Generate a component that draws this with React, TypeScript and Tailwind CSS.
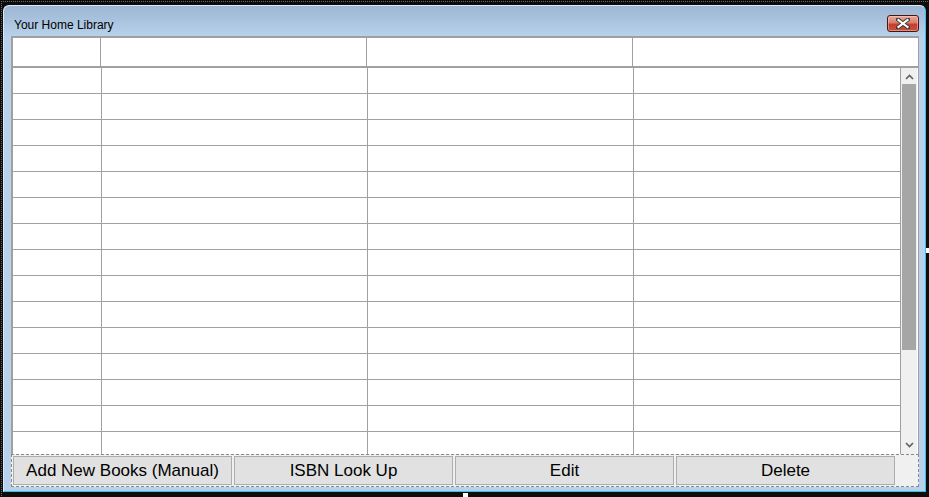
import React from 'react';

const buttons = ['Add New Books (Manual)', 'ISBN Look Up', 'Edit', 'Delete'];
const rows = Array.from({ length: 15 }, (_, i) => i);

const CloseButton = () => (
  <div className="flex h-[17px] w-[32px] items-center justify-center rounded-[3px] border border-[#4a1410] bg-[linear-gradient(180deg,#eaa999_0%,#d87d6b_45%,#c2402f_55%,#c9503c_100%)] shadow-[inset_0_0_0_1px_rgba(255,220,210,0.45)]">
    <svg width="14" height="11" viewBox="0 0 14 11">
      <path
        d="M2 1.5 L12 9.5 M12 1.5 L2 9.5"
        stroke="#3a3a3a"
        strokeWidth="4"
        strokeLinecap="square"
      />
      <path
        d="M2.5 2 L11.5 9 M11.5 2 L2.5 9"
        stroke="#ffffff"
        strokeWidth="2.2"
        strokeLinecap="square"
      />
    </svg>
  </div>
);

const Chevron = ({ up }: { up?: boolean }) => (
  <svg width="9" height="6" viewBox="0 0 9 6">
    <path
      d={up ? 'M1 5 L4.5 1.5 L8 5' : 'M1 1 L4.5 4.5 L8 1'}
      stroke="#606060"
      strokeWidth="1.6"
      fill="none"
    />
  </svg>
);

export default function App() {
  return (
    <div className="relative h-[497px] w-[929px] overflow-hidden bg-[#0d0d0d] p-[1px] font-['Liberation_Sans',Arial,sans-serif]">
      <div className="flex h-full flex-col border-l border-t border-dotted border-[#6a6a6a] pb-[4px] pl-[1px] pr-[2px] pt-[3px]">
        {/* Window */}
        <div className="flex flex-1 flex-col rounded-t-[6px] border-b border-r border-l border-t border-b-[#2fc3ee] border-l-[#dbe8f5] border-r-[#2fc3ee] border-t-[#dbe8f5] bg-[#b9d1ea]">
          {/* Title bar */}
          <div className="flex h-[30px] items-start justify-between rounded-t-[6px] bg-[linear-gradient(180deg,#9bb5d3_0%,#adc7e2_60%,#b9d1ea_100%)] pl-[10px] pr-[6px] pt-[9px]">
            <span className="mt-[2px] text-[12px] leading-[16px] text-black">Your Home Library</span>
            <CloseButton />
          </div>

          {/* Client area */}
          <div className="ml-[7px] mr-[6px] flex flex-col bg-[#f0f0f0]">
            {/* Grid */}
            <div className="flex h-[418px] flex-col border-l-2 border-t-2 border-r border-[#a0a0a0] bg-white">
              {/* Header */}
              <div className="flex h-[30px] shrink-0 border-b-2 border-[#a0a0a0]">
                <div className="w-[88px] border-r border-[#a0a0a0]" />
                <div className="w-[266px] border-r border-[#a0a0a0]" />
                <div className="w-[266px] border-r border-[#a0a0a0]" />
                <div className="flex-1" />
              </div>
              {/* Body */}
              <div className="flex min-h-0 flex-1">
                <div className="flex w-[888px] flex-col overflow-hidden">
                  {rows.map(r => (
                    <div key={r} className="flex h-[26px] shrink-0 border-b border-[#a0a0a0]">
                      <div className="w-[89px] border-r border-[#a0a0a0]" />
                      <div className="w-[266px] border-r border-[#a0a0a0]" />
                      <div className="w-[266px] border-r border-[#a0a0a0]" />
                      <div className="w-[267px] border-r border-[#a0a0a0]" />
                    </div>
                  ))}
                </div>
                {/* Scrollbar */}
                <div className="flex w-[16px] flex-col bg-[#f0f0f0]">
                  <div className="flex h-[16px] items-center justify-center pt-[2px]">
                    <Chevron up />
                  </div>
                  <div className="mx-[1px] h-[266px] bg-[#a6a6a6]" />
                  <div className="flex-1" />
                  <div className="flex h-[16px] items-center justify-center pb-[2px]">
                    <Chevron />
                  </div>
                </div>
              </div>
            </div>

            {/* Button bar */}
            <div className="flex h-[33px] gap-[2px] border border-dashed border-[#8a8a8a] p-[1px]">
              {buttons.map(b => (
                <button
                  key={b}
                  className="flex h-[29px] w-[219px] items-center justify-center border border-[#adadad] bg-[#e1e1e1] text-[17px] leading-none text-black"
                >
                  {b}
                </button>
              ))}
            </div>
          </div>
        </div>
      </div>

      {/* resize grip marks */}
      <div className="absolute left-[926px] top-[248px] h-[5px] w-[3px] bg-white" />
      <div className="absolute left-[463px] top-[493px] h-[4px] w-[5px] bg-white" />
    </div>
  );
}
